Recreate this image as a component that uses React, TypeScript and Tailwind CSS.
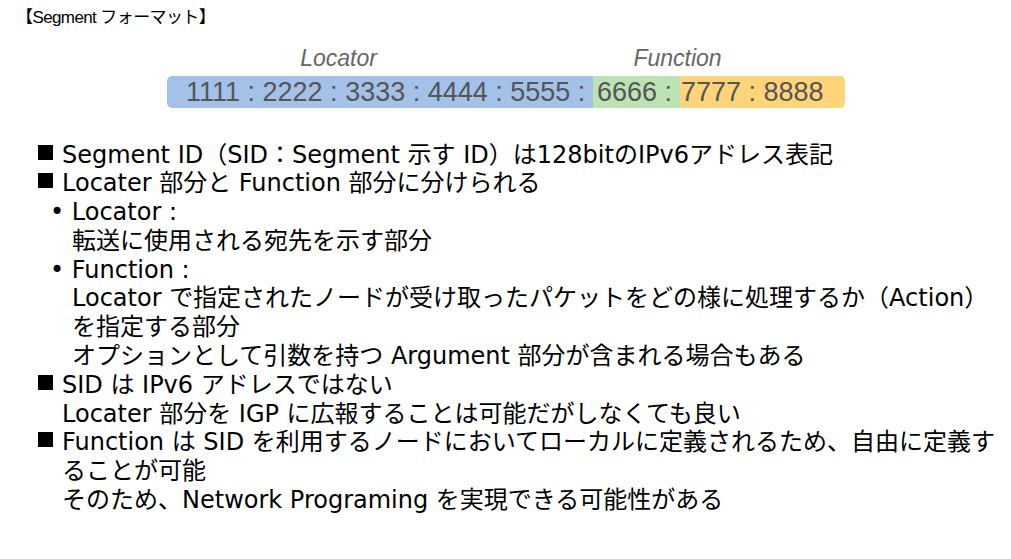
export default function App() {
  const f = { fontFamily: '"DejaVu Sans","Noto Sans CJK JP",sans-serif' };
  const Sq = () => <span className="inline-block w-[15px] h-[15px] bg-black mr-[9px] ml-[38px] mb-[3px]" />;
  return (
    <div className="w-[1011px] h-[559px] bg-white relative overflow-hidden text-black" style={f}>
      <div className="pt-[5px] pl-[16px] text-[17px] tracking-[-0.6px]" style={{ fontFamily: '"Liberation Sans","Noto Sans CJK JP",sans-serif' }}>【Segment フォーマット】</div>
      <div className="flex ml-[167px] mt-[12px] w-[678px] text-[23px] leading-[30px] italic text-[#666]" style={{ fontFamily: '"Liberation Sans",sans-serif' }}>
        <div className="w-[343px] text-center">Locator</div>
        <div className="w-[335px] text-center">Function</div>
      </div>
      <div className="flex ml-[167px] mt-[3px] w-[678px] h-[32px] rounded-[5px] overflow-hidden text-[27px] text-[#555] leading-[33px] whitespace-pre" style={{ fontFamily: '"Liberation Sans",sans-serif' }}>
        <div className="w-[426px] bg-[#a4c2e8] pl-[19px]">1111 : 2222 : 3333 : 4444 : 5555 :</div>
        <div className="w-[87px] bg-[#bde3b4] pl-[4px]">6666 :</div>
        <div className="flex-1 bg-[#fdd47a] pl-[1px]">7777 : 8888</div>
      </div>
      <div className="mt-[33px] text-[24px] leading-[28.8px] whitespace-pre">
        <div><Sq />Segment ID（SID：Segment 示す ID）は128bitのIPv6アドレス表記</div>
        <div><Sq />Locater 部分と Function 部分に分けられる</div>
        <div className="pl-[50px]">• Locator :</div>
        <div className="pl-[72px]">転送に使用される宛先を示す部分</div>
        <div className="pl-[50px]">• Function :</div>
        <div className="pl-[72px]">Locator で指定されたノードが受け取ったパケットをどの様に処理するか（Action）</div>
        <div className="pl-[72px]">を指定する部分</div>
        <div className="pl-[72px]">オプションとして引数を持つ Argument 部分が含まれる場合もある</div>
        <div><Sq />SID は IPv6 アドレスではない</div>
        <div className="pl-[62px]">Locater 部分を IGP に広報することは可能だがしなくても良い</div>
        <div><Sq />Function は SID を利用するノードにおいてローカルに定義されるため、自由に定義す</div>
        <div className="pl-[62px]">ることが可能</div>
        <div className="pl-[62px]">そのため、Network Programing を実現できる可能性がある</div>
      </div>
    </div>
  );
}
